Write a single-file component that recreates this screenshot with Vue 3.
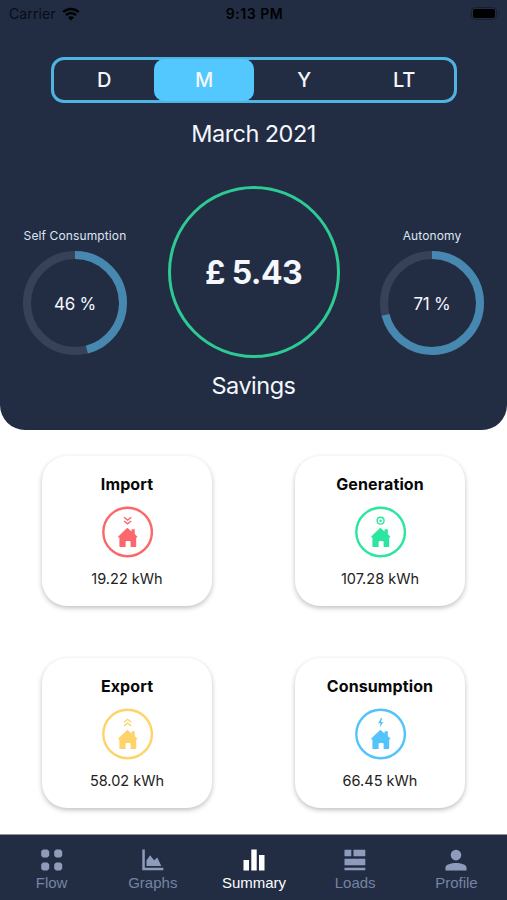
<template>
    <div class="app">
        <header class="hero">
            <div class="status">
                <div class="carrier">
                    <span>Carrier</span>
                    <svg class="wifi" viewBox="0 0 18 14">
                        <path d="M1.2 5.2A11.2 11.2 0 0 1 16.8 5.2" />
                        <path d="M4 8.1A7.2 7.2 0 0 1 14 8.1" />
                        <path class="dot" d="M9 13.6L5.9 10.5A4.4 4.4 0 0 1 12.1 10.5Z" />
                    </svg>
                </div>
                <div class="time">9:13 PM</div>
                <svg class="battery" viewBox="0 0 29 13">
                    <rect class="shell" x="0.5" y="0.5" width="25" height="12" rx="3.5" />
                    <rect x="2" y="2" width="22" height="9" rx="2" />
                    <path class="cap" d="M27 4.5Q28.6 6.5 27 8.5Z" />
                </svg>
            </div>

            <div class="segment">
                <button
                    v-for="item in ranges"
                    :key="item"
                    :class="{ active: item === range }"
                    @click="range = item">
                    {{ item }}
                </button>
            </div>
            <div class="period">March 2021</div>

            <div class="gauges">
                <div v-for="g in gauges" :key="g.label" class="gauge" :class="g.side">
                    <div class="gauge-label">{{ g.label }}</div>
                    <div class="ring">
                        <svg viewBox="0 0 104 104">
                            <circle class="track" cx="52" cy="52" r="48" />
                            <circle
                                class="value"
                                cx="52"
                                cy="52"
                                r="48"
                                pathLength="100"
                                :stroke-dasharray="`${g.value} 100`"
                                transform="rotate(-90 52 52)" />
                        </svg>
                        <span>{{ g.value }} %</span>
                    </div>
                </div>
                <div class="savings">
                    <div class="amount"><span>£ 5.43</span></div>
                    <div class="savings-label">Savings</div>
                </div>
            </div>
        </header>

        <main class="cards">
            <div v-for="card in cards" :key="card.title" class="card" :class="card.type">
                <h2>{{ card.title }}</h2>
                <svg class="house" viewBox="-0.6 0 52 52">
                    <circle class="line" cx="26" cy="26" r="24.3" />
                    <path
                        d="M26 22L30 25.4V23.2H33.2V28.1L35.8 30.7Q36 31.4 35.2 31.4H34.6V40.2Q34.6 41 33.8 41H29V36Q29 35 28 35H25Q24 35 24 36V41H18.6Q17.8 41 17.8 40.2V31.4H17Q16.2 31.4 16.6 30.6L25.2 22.3Q25.6 21.9 26 22Z" />
                    <path v-if="card.type === 'import'" class="thin" d="M22.4 11.2L26 14.1L29.6 11.2M22.4 15L26 17.9L29.6 15" />
                    <path v-if="card.type === 'export'" class="thin" d="M22.4 14.2L26 11.3L29.6 14.2M22.4 18L26 15.1L29.6 18" />
                    <g v-if="card.type === 'generation'">
                        <circle class="thin" cx="26" cy="14.7" r="3.4" />
                        <circle cx="26" cy="14.7" r="1.3" />
                    </g>
                    <path v-if="card.type === 'consumption'" d="M26.4 10L23.6 15.2H25.8L25.2 19.4L28.6 13.9H26.4L27.5 10Z" />
                </svg>
                <p>{{ card.amount }}</p>
            </div>
        </main>

        <nav class="tabs">
            <a v-for="tab in tabs" :key="tab.name" :class="{ active: tab.name === 'Summary' }">
                <svg viewBox="0 0 22 22"><path :d="tab.icon" /></svg>
                <span>{{ tab.name }}</span>
            </a>
        </nav>
    </div>
</template>

<script setup>
    import { ref } from 'vue'

    const ranges = ['D', 'M', 'Y', 'LT']
    const range = ref('M')

    const gauges = [
        { label: 'Self Consumption', value: 46, side: 'left' },
        { label: 'Autonomy', value: 71, side: 'right' },
    ]

    const cards = [
        { type: 'import', title: 'Import', amount: '19.22 kWh' },
        { type: 'generation', title: 'Generation', amount: '107.28 kWh' },
        { type: 'export', title: 'Export', amount: '58.02 kWh' },
        { type: 'consumption', title: 'Consumption', amount: '66.45 kWh' },
    ]

    const tabs = [
        {
            name: 'Flow',
            icon: 'M2 .5H6.4L8.2 2.3V6.7L6.4 8.5H2L.2 6.7V2.3ZM15 .5H19.4L21.2 2.3V6.7L19.4 8.5H15L13.2 6.7V2.3ZM2 13.5H6.4L8.2 15.3V19.7L6.4 21.5H2L.2 19.7V15.3ZM15 13.5H19.4L21.2 15.3V19.7L19.4 21.5H15L13.2 19.7V15.3Z',
        },
        {
            name: 'Graphs',
            icon: 'M.3 .5H2.8V18.8H21.3V21.3H.3ZM4.5 17V11.5L8.1 6.3L12.1 11.3L15.3 8.6L19.3 17Z',
        },
        { name: 'Summary', icon: 'M.5 11H6V21.5H.5ZM8.3 .5H13.7V21.5H8.3ZM16 6H21.5V21.5H16Z' },
        { name: 'Loads', icon: 'M.5 .8H7.3V7.2H.5ZM9.5 .8H21.3V7.2H9.5ZM.5 9.8H21.3V16.2H.5ZM.5 18.8H21.3V21.3H.5Z' },
        {
            name: 'Profile',
            icon: 'M11 .8A5.3 5.3 0 1 1 11 11.4A5.3 5.3 0 1 1 11 .8ZM.5 21.5V18.5C.5 15.7 6 14 11 14S21.5 15.7 21.5 18.5V21.5Z',
        },
    ]
</script>

<style>
    body {
        background: #fff;
    }
</style>

<style scoped>
    .app {
        display: flex;
        flex-direction: column;
        height: 900px;
        width: 507px;
        overflow: hidden;
        font-family: Inter, "Liberation Sans", sans-serif;
    }

    .hero {
        height: 430px;
        box-sizing: border-box;
        background: #222d44;
        border-radius: 0 0 25px 25px;
        color: #f4f7fc;
        flex-shrink: 0;
    }

    .status {
        display: grid;
        grid-template-columns: 1fr auto 1fr;
        height: 27px;
        align-items: center;
        padding: 0 7px 0 9px;
        color: #080c15;
        font-size: 14px;
    }

    .carrier {
        display: flex;
        align-items: center;
        gap: 6px;
        letter-spacing: 0.1px;
    }

    .wifi {
        width: 18px;
        height: 14px;
        fill: none;
        stroke: #000;
        stroke-width: 2.4;
    }

    .wifi .dot {
        fill: #000;
        stroke: none;
    }

    .time {
        font-weight: 600;
        letter-spacing: 0.55px;
        color: #000;
    }

    .battery {
        width: 29px;
        height: 13px;
        justify-self: end;
    }

    .shell {
        fill: none;
        stroke: #172033;
    }

    .cap {
        fill: #172033;
    }

    .segment {
        display: grid;
        grid-template-columns: repeat(4, 1fr);
        width: 406px;
        height: 46px;
        box-sizing: border-box;
        margin: 30px 0 0 51px;
        border: 3px solid #4fb4e1;
        border-radius: 13px;
    }

    .segment button {
        border: 0;
        padding: 0;
        background: none;
        color: inherit;
        font: 500 20px Inter, sans-serif;
        letter-spacing: -0.3px;
        border-radius: 10px;
    }

    /* the selected pill runs over the frame's inner edge */
    .segment .active {
        margin: -1px 0;
        background: #52c8ff;
    }

    .period {
        margin-top: 16px;
        line-height: 30px;
        text-align: center;
        font-size: 23.5px;
        letter-spacing: -0.55px;
    }

    .gauges {
        display: grid;
        grid-template-columns: 150px 1fr 150px;
        grid-template-areas: "left middle right";
        margin-top: 37px;
    }

    .gauge {
        display: flex;
        flex-direction: column;
        align-items: center;
        padding-top: 42px;
    }

    .left {
        grid-area: left;
    }

    .right {
        grid-area: right;
    }

    .gauge-label {
        font-size: 12px;
        line-height: 16px;
        letter-spacing: 0.12px;
        white-space: nowrap;
        color: #dfe5f0;
    }

    .ring {
        display: grid;
        place-items: center;
        margin-top: 7px;
        font-size: 17px;
        letter-spacing: -0.2px;
    }

    .ring > * {
        grid-area: 1 / 1;
    }

    .ring span {
        padding-top: 2px;
    }

    .ring svg {
        width: 104px;
        height: 104px;
        fill: none;
        stroke-width: 8;
    }

    .track {
        stroke: #374259;
    }

    .value {
        stroke: #4688b0;
    }

    .savings {
        grid-area: middle;
        display: flex;
        flex-direction: column;
        align-items: center;
    }

    .amount {
        display: grid;
        place-items: center;
        width: 172px;
        height: 172px;
        box-sizing: border-box;
        border: 3px solid #2dca94;
        border-radius: 50%;
        font-size: 32px;
        font-weight: 700;
        letter-spacing: -0.65px;
    }

    .savings-label {
        margin-top: 13px;
        font-size: 23.5px;
        line-height: 30px;
        letter-spacing: -0.5px;
    }

    .cards {
        display: grid;
        grid-template-columns: 170px 170px;
        grid-auto-rows: 150px;
        gap: 52px 83px;
        padding: 26px 42px 0;
        flex: 1;
    }

    .card {
        display: flex;
        flex-direction: column;
        align-items: center;
        border-radius: 25px;
        background: #fff;
        box-shadow: 0 2px 5px rgba(0, 0, 0, 0.25);
    }

    .card h2 {
        margin: 18px 0 0;
        font-size: 16px;
        line-height: 20px;
        font-weight: 700;
        letter-spacing: 0.1px;
        color: #080808;
    }

    .card p {
        margin: 11px 0 0;
        font-size: 14.5px;
        line-height: 20px;
        color: #222;
    }

    .house {
        width: 52px;
        height: 52px;
        margin-top: 12px;
        fill: currentColor;
    }

    .line {
        fill: none;
        stroke: currentColor;
        stroke-width: 2.4;
    }

    .thin {
        fill: none;
        stroke: currentColor;
        stroke-width: 1.4;
    }

    .import .house {
        color: #fb686b;
    }

    .generation .house {
        color: #2be69e;
    }

    .export .house {
        color: #ffd36b;
    }

    .consumption .house {
        color: #52c4fb;
    }

    .tabs {
        display: grid;
        grid-template-columns: repeat(5, 1fr);
        height: 66px;
        box-sizing: border-box;
        padding-left: 1px;
        border-top: 1px solid #8d929c;
        background: #222d44;
        color: #7683a2;
        font-family: "Liberation Sans", Arial, sans-serif;
        font-size: 15px;
    }

    .tabs a {
        display: flex;
        flex-direction: column;
        align-items: center;
        padding-top: 14px;
    }

    .tabs svg {
        width: 22px;
        height: 22px;
        fill: #8f9bba;
    }

    .tabs span {
        margin-top: 3px;
        line-height: 18px;
    }

    .tabs .active {
        color: #fff;
    }

    .tabs .active svg {
        fill: #fff;
    }
</style>
